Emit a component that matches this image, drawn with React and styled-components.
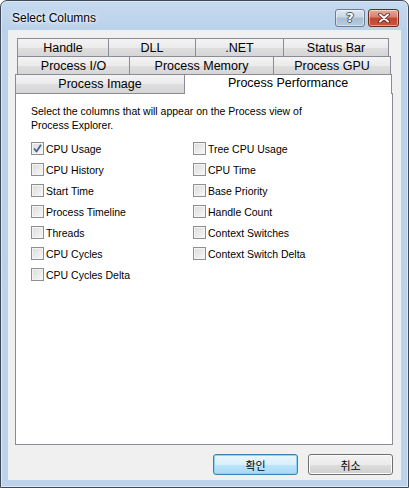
import React from "react";
import styled, { createGlobalStyle } from "styled-components";

const GlobalStyle = createGlobalStyle`
  html, body { margin: 0; padding: 0; width: 409px; height: 488px; overflow: hidden; background: #ffffff; }
  *, *::before, *::after { box-sizing: border-box; }
`;

const Window = styled.div`
  width: 409px;
  height: 488px;
  display: flex;
  flex-direction: column;
  border: 1px solid #3f4a57;
  border-radius: 7px 7px 0 0;
  background: linear-gradient(#c6daef 0px, #b9d1ea 30px, #bcd3eb 100%);
  box-shadow: inset 0 0 0 1px #dce8f5;
  font-family: "Liberation Sans", Arial, sans-serif;
`;

const TitleBar = styled.div`
  height: 29px;
  display: flex;
  align-items: flex-start;
  padding-left: 11px;
  padding-right: 9px;
`;

const Title = styled.div`
  font-size: 12px;
  color: #000;
  line-height: 14px;
  margin-top: 10px;
  text-shadow: 0 0 6px #ffffff, 0 0 3px #ffffff;
`;

const TitleButtons = styled.div`
  margin-left: auto;
  margin-top: 8px;
  display: flex;
  gap: 3px;
`;

const CaptionButton = styled.div`
  width: ${(p) => p.$w}px;
  height: 18px;
  border: 1px solid ${(p) => (p.$red ? "#6d2a22" : "#6d7c8e")};
  border-radius: 3px;
  display: flex;
  align-items: center;
  justify-content: center;
  background: ${(p) =>
    p.$red
      ? "linear-gradient(#e9a99b 0%, #d7806d 45%, #c3442f 50%, #c9563d 100%)"
      : "linear-gradient(#dfe8f2 0%, #c9d6e4 45%, #a9bdd3 50%, #b7cbe0 100%)"};
  box-shadow: inset 0 0 0 1px rgba(255, 255, 255, 0.45);
`;

const HelpGlyph = styled.span`
  font-family: "DejaVu Sans", sans-serif;
  font-size: 13px;
  font-weight: bold;
  color: #ffffff;
  line-height: 14px;
  text-shadow: 0 0 1px #3a4a5c, 1px 0 0 #4a5a6c, -1px 0 0 #4a5a6c, 0 1px 0 #4a5a6c, 0 -1px 0 #4a5a6c;
`;

const Client = styled.div`
  flex: 1;
  margin: 0 7px 7px 7px;
  background: #f0f0f0;
  display: flex;
  flex-direction: column;
  padding: 8px 8px 5px 7px;
`;

const TabRow = styled.div`
  display: flex;
  height: ${(p) => p.$h}px;
  margin-left: ${(p) => p.$indent}px;
`;

const Tab = styled.div`
  width: ${(p) => p.$w}px;
  height: ${(p) => p.$h}px;
  margin-left: -1px;
  &:first-child { margin-left: 0; }
  border: 1px solid #898c95;
  border-bottom: none;
  display: flex;
  align-items: center;
  justify-content: center;
  font-size: 12.5px;
  color: #000;
  padding-bottom: ${(p) => (p.$active ? 3 : 0)}px;
  background: ${(p) =>
    p.$active ? "#ffffff" : "linear-gradient(#f3f3f3 0%, #ebebeb 50%, #dedede 51%, #d6d6d6 100%)"};
  position: relative;
  z-index: ${(p) => (p.$active ? 2 : 1)};
  ${(p) => (p.$active ? "margin-bottom: -1px; height: " + (p.$h + 1) + "px;" : "")}
`;

const Panel = styled.div`
  height: 352px;
  border: 1px solid #898c95;
  background: #ffffff;
  padding: 10px 15px;
`;

const Intro = styled.div`
  font-size: 10.5px;
  line-height: 14px;
  color: #000;
`;

const Grid = styled.div`
  margin-top: 6px;
  display: grid;
  grid-template-columns: 162px 1fr;
  grid-auto-rows: 21px;
  grid-auto-flow: column;
  grid-template-rows: repeat(7, 21px);
`;

const Item = styled.label`
  display: flex;
  align-items: center;
  gap: 2px;
  font-size: 10.5px;
  color: #000;
`;

const Box = styled.span`
  width: 13px;
  height: 13px;
  border: 1px solid #8e8f8f;
  background: linear-gradient(135deg, #dcdcdc 0%, #ececec 60%, #fbfbfb 100%);
  box-shadow: inset 0 0 0 1px #f4f4f4;
  display: flex;
  align-items: center;
  justify-content: center;
  flex: none;
`;

const ButtonRow = styled.div`
  margin-top: 9px;
  display: flex;
  justify-content: flex-end;
  gap: 10px;
`;

const Button = styled.div`
  width: 85px;
  height: 21px;
  border: 1px solid ${(p) => (p.$default ? "#3c7fb1" : "#707070")};
  border-radius: 3px;
  display: flex;
  align-items: center;
  justify-content: center;
  font-family: "Noto Sans CJK KR", "Liberation Sans", sans-serif;
  font-size: 11px;
  color: #000;
  background: ${(p) =>
    p.$default
      ? "linear-gradient(#eaf6fd 0%, #d9f0fc 50%, #bee6fd 51%, #a7d9f5 100%)"
      : "linear-gradient(#f2f2f2 0%, #ebebeb 50%, #dddddd 51%, #cfcfcf 100%)"};
  box-shadow: ${(p) => (p.$default ? "inset 0 0 0 1px #8fd3f5" : "inset 0 0 0 1px #fcfcfc")};
`;

const tabRows = [
  { h: 18, indent: 2, tabs: [["Handle", 92], ["DLL", 88], [".NET", 89], ["Status Bar", 106]] },
  { h: 18, indent: 2, tabs: [["Process I/O", 113], ["Process Memory", 145], ["Process GPU", 118]] },
  { h: 19, indent: 0, tabs: [["Process Image", 170], ["Process Performance", 208, true]] },
];

const items = [
  ["CPU Usage", true],
  ["CPU History"],
  ["Start Time"],
  ["Process Timeline"],
  ["Threads"],
  ["CPU Cycles"],
  ["CPU Cycles Delta"],
  ["Tree CPU Usage"],
  ["CPU Time"],
  ["Base Priority"],
  ["Handle Count"],
  ["Context Switches"],
  ["Context Switch Delta"],
];

function Check() {
  return (
    <svg width="9" height="9" viewBox="0 0 9 9">
      <path d="M1 4.5 L3.5 7.5 L8 0.8" fill="none" stroke="#4a5f97" strokeWidth="1.8" strokeLinejoin="round" />
    </svg>
  );
}

export default function App() {
  return (
    <>
      <GlobalStyle />
      <Window>
        <TitleBar>
          <Title>Select Columns</Title>
          <TitleButtons>
            <CaptionButton $w={30}>
              <HelpGlyph>?</HelpGlyph>
            </CaptionButton>
            <CaptionButton $w={31} $red>
              <svg width="12" height="10" viewBox="0 0 12 10">
                <path d="M2 1.5 L10 8.5 M10 1.5 L2 8.5" stroke="#5a1e16" strokeWidth="3.6" strokeLinecap="round" />
                <path d="M2 1.5 L10 8.5 M10 1.5 L2 8.5" stroke="#ffffff" strokeWidth="2" strokeLinecap="round" />
              </svg>
            </CaptionButton>
          </TitleButtons>
        </TitleBar>
        <Client>
          {tabRows.map((row, i) => (
            <TabRow key={i} $h={row.h} $indent={row.indent}>
              {row.tabs.map(([label, w, active]) => (
                <Tab key={label} $w={w} $h={row.h} $active={active}>
                  {label}
                </Tab>
              ))}
            </TabRow>
          ))}
          <Panel>
            <Intro>
              Select the columns that will appear on the Process view of
              <br />
              Process Explorer.
            </Intro>
            <Grid>
              {items.map(([label, checked]) => (
                <Item key={label}>
                  <Box>{checked && <Check />}</Box>
                  {label}
                </Item>
              ))}
            </Grid>
          </Panel>
          <ButtonRow>
            <Button $default>확인</Button>
            <Button>취소</Button>
          </ButtonRow>
        </Client>
      </Window>
    </>
  );
}
